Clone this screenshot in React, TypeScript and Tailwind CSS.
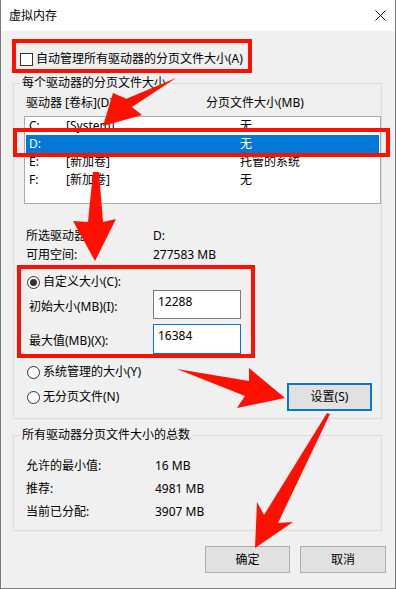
const red = "#ff1000";

const drives = [
  { drive: "C:", label: "[System]", size: "无" },
  { drive: "D:", label: "", size: "无" },
  { drive: "E:", label: "[新加卷]", size: "托管的系统" },
  { drive: "F:", label: "[新加卷]", size: "无" },
];

function Radio({ checked = false }: { checked?: boolean }) {
  return (
    <span className="flex h-[13px] w-[13px] shrink-0 items-center justify-center rounded-full border border-[#333333] bg-white">
      {checked ? <span className="h-[7px] w-[7px] rounded-full bg-[#333333]" /> : null}
    </span>
  );
}

function Arrows() {
  return (
    <svg
      className="pointer-events-none absolute left-[-1px] top-0 h-[589px] w-[396px]"
      viewBox="0 0 396 589"
      fill={red}
    >
      <polygon points="176,78 126.4,98.7 113,93 103,126 142,115 131.9,107" />
      <polygon points="93,172 99,172 103,222 116,219 95,261 73,221 88,222" />
      <polygon points="177,369 249,381 249,368 285,398 237,408 245,396" />
      <polygon points="327,413 330,414 278,523 293,522 255,548 257,502 264,515" />
    </svg>
  );
}

export default function App() {
  return (
    <div className="relative h-[589px] w-[396px] border-x border-b border-[#7a7a7a] bg-[#f0f0f0] font-[family-name:'Noto_Sans','Noto_Sans_CJK_SC',sans-serif] text-[12px] leading-[16px] text-black">
      <div className="flex h-[31px] items-center justify-between bg-white pl-[8px] pr-[9px]">
        <span>虚拟内存</span>
        <svg className="h-[11px] w-[11px]" viewBox="0 0 11 11" stroke="#111" strokeWidth="1">
          <path d="M0.5 0.5 L10.5 10.5 M10.5 0.5 L0.5 10.5" />
        </svg>
      </div>

      <div className="ml-[11px] mt-[8px] flex h-[34px] w-[240px] items-center border-4 border-[#ff1000] pl-[4px] pt-[6px]">
        <span className="h-[13px] w-[13px] border border-[#333333] bg-white" />
        <span className="ml-[3px]">自动管理所有驱动器的分页文件大小(A)</span>
      </div>

      <fieldset className="ml-[12px] mt-[2px] w-[369px] border border-[#dcdcdc] pb-[7px]">
        <legend className="ml-[6px] px-[2px] leading-[16px]">每个驱动器的分页文件大小</legend>
        <div className="mt-[4px] flex h-[16px] pl-[12px]">
          <span className="w-[180px]">驱动器 [卷标](D)</span>
          <span>分页文件大小(MB)</span>
        </div>
        <div className="ml-[10px] mt-[5px] h-[88px] w-[357px] border border-[#acacac] bg-white px-[1px]">
          {drives.map((d) => (
            <div
              key={d.drive}
              className={
                d.drive === "D:"
                  ? "grid h-[18px] grid-cols-[37px_174px_1fr] items-center bg-[#0078d7] pl-[3px] text-white"
                  : "grid h-[18px] grid-cols-[37px_174px_1fr] items-center pl-[3px]"
              }
            >
              <span>{d.drive}</span>
              <span>{d.label}</span>
              <span>{d.size}</span>
            </div>
          ))}
        </div>

        <div className="mt-[22px] pl-[12px]">
          <div className="grid h-[19px] grid-cols-[127px_1fr] items-center">
            <span>所选驱动器:</span>
            <span>D:</span>
          </div>
          <div className="grid h-[19px] grid-cols-[127px_1fr] items-center">
            <span>可用空间:</span>
            <span>277583 MB</span>
          </div>
        </div>

        <div className="ml-[3px] mt-[1px] h-[93px] w-[238px] border-4 border-[#ff1000]">
          <div className="mt-[5px] flex h-[16px] items-center pl-[6px]">
            <Radio checked />
            <span className="ml-[3px]">自定义大小(C):</span>
          </div>
          <div className="flex h-[29px] pl-[8px]">
            <span className="w-[124px] pt-[9px]">初始大小(MB)(I):</span>
            <div className="h-[29px] w-[88px] border border-[#7a7a7a] bg-white pl-[4px] pt-[3px]">12288</div>
          </div>
          <div className="mt-[5px] flex h-[30px] pl-[8px]">
            <span className="w-[124px] pt-[9px]">最大值(MB)(X):</span>
            <div className="h-[30px] w-[88px] border border-[#0078d7] bg-white pl-[4px] pt-[3px]">16384</div>
          </div>
        </div>

        <div className="mt-[6px] flex h-[16px] items-center pl-[13px]">
          <Radio />
          <span className="ml-[3px]">系统管理的大小(Y)</span>
        </div>
        <div className="mt-[3px] flex h-[28px] items-center justify-between pl-[13px] pr-[9px]">
          <div className="flex items-center">
            <Radio />
            <span className="ml-[3px]">无分页文件(N)</span>
          </div>
          <button
            type="button"
            className="flex h-[28px] w-[85px] items-center justify-center border-2 border-[#0078d7] bg-[#e1e1e1]"
          >
            设置(S)
          </button>
        </div>
      </fieldset>

      <fieldset className="ml-[12px] mt-[8px] w-[369px] border border-[#dcdcdc] pb-[7px]">
        <legend className="ml-[6px] px-[2px] leading-[16px]">所有驱动器分页文件大小的总数</legend>
        <div className="mt-[11px] pl-[12px]">
          <div className="grid h-[23px] grid-cols-[129px_1fr] items-center">
            <span>允许的最小值:</span>
            <span>16 MB</span>
          </div>
          <div className="grid h-[23px] grid-cols-[129px_1fr] items-center">
            <span>推荐:</span>
            <span>4981 MB</span>
          </div>
          <div className="grid h-[23px] grid-cols-[129px_1fr] items-center">
            <span>当前已分配:</span>
            <span>3907 MB</span>
          </div>
        </div>
      </fieldset>

      <div className="mt-[15px] flex justify-end gap-[10px] pr-[9px]">
        <button
          type="button"
          className="flex h-[27px] w-[85px] items-center justify-center border border-[#adadad] bg-[#e1e1e1]"
        >
          确定
        </button>
        <button
          type="button"
          className="flex h-[27px] w-[86px] items-center justify-center border border-[#adadad] bg-[#e1e1e1]"
        >
          取消
        </button>
      </div>

      {/* highlight around the selected drive row */}
      <div className="pointer-events-none absolute left-[12px] top-[128px] h-[29px] w-[377px] border-4 border-[#ff1000]" />
      <Arrows />
    </div>
  );
}
